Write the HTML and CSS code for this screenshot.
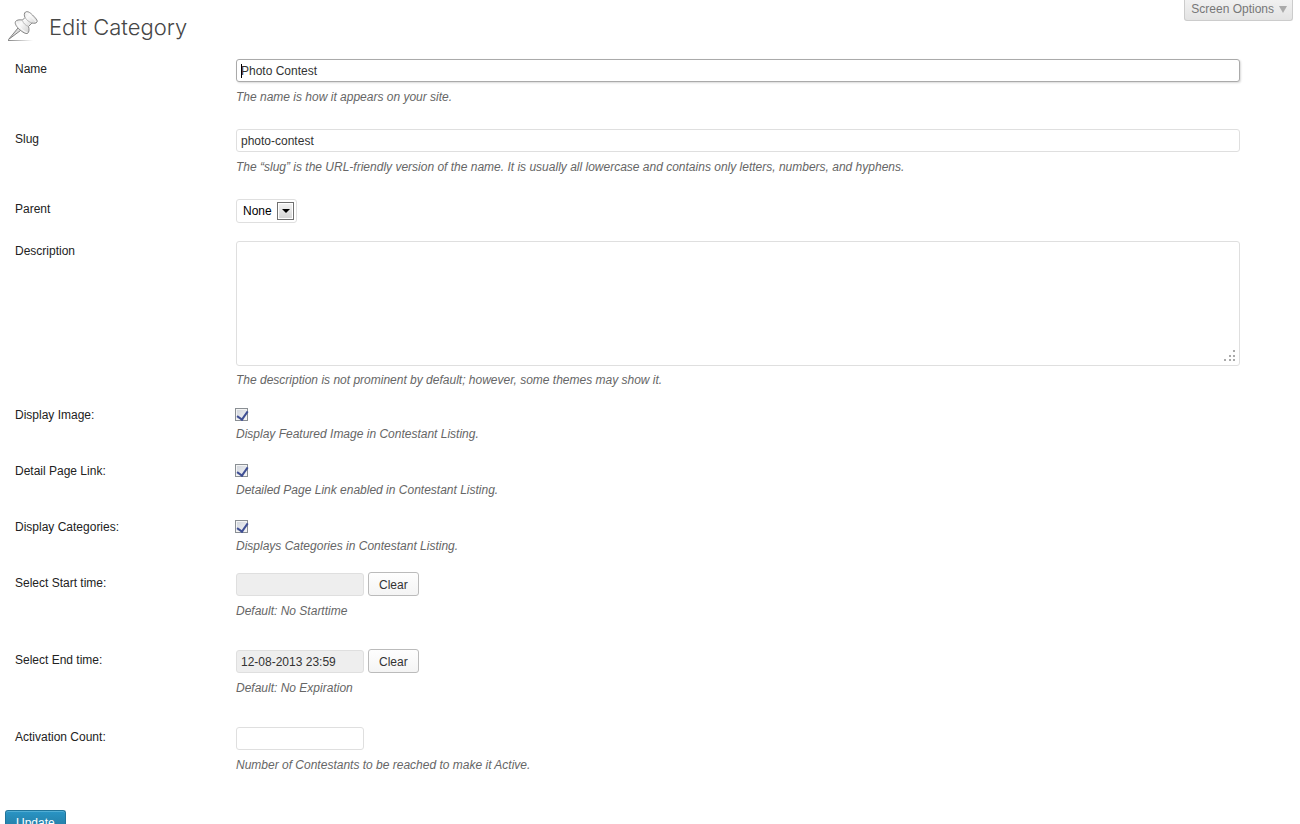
FILE: index.html
```html
<!DOCTYPE html>
<html lang="en">
<head>
  <meta charset="UTF-8">
  <meta name="viewport" content="width=device-width, initial-scale=1.0">
  <title>Edit Category</title>
  <link rel="stylesheet" href="styles.css">
</head>
<body>
  <button type="button" class="screen-options">Screen Options <span class="arrow"></span></button>

  <div class="wrap">
    <header class="page-title">
      <svg class="icon-pin" width="32" height="32" viewBox="0 0 32 32" aria-hidden="true">
        <defs>
          <linearGradient id="metal" x1="0" y1="0" x2="1" y2="1">
            <stop offset="0" stop-color="#c8c8c8"/>
            <stop offset="0.4" stop-color="#fafafa"/>
            <stop offset="1" stop-color="#bbb"/>
          </linearGradient>
          <linearGradient id="shade" x1="0" y1="0" x2="1" y2="0">
            <stop offset="0" stop-color="#888"/>
            <stop offset="1" stop-color="#888" stop-opacity="0"/>
          </linearGradient>
        </defs>
        <path d="M1 29h25v1H1z" fill="url(#shade)"/>
        <path d="M1.500 28.500 L11 17 L13.500 19.500 Z" fill="#ddd" stroke="#777" stroke-width="0.900" stroke-linejoin="round"/>
        <path d="M8.500 10.500 C9.500 9 12 8.500 15.500 9 L18 6.500 C17 4.500 17 2 18.500 1 C20.500 0 22.500 1 25.500 4 C28.500 7 31 9.500 30 11 C29 12.500 27 12.500 25 12 L21.500 15.500 C22.500 18.500 22 21.500 20.500 22.500 C18.500 23 16 21.500 12.500 18.500 C9.500 15.500 7.500 13 8.500 10.500 Z" fill="url(#metal)" stroke="#888" stroke-width="1" stroke-linejoin="round"/>
        <path d="M15.500 9.500 C16 12 18.500 14.500 21.500 15.500 M18 6.500 C19.500 9 22 11 25 12" fill="none" stroke="#aaa" stroke-width="0.800"/>
        <path d="M19 2 C22 3 27 8 29 11 M9.500 11 C11 15.500 16 20 20 21.500" fill="none" stroke="#fff" stroke-width="1"/>
      </svg>
      <h1>Edit Category</h1>
    </header>

    <form>
      <div class="row row-text">
        <label for="name">Name</label>
        <div class="field">
          <div class="focused"><input type="text" id="name" name="name" class="wide" value="Photo Contest"></div>
          <p>The name is how it appears on your site.</p>
        </div>
      </div>
      <div class="row row-text">
        <label for="slug">Slug</label>
        <div class="field">
          <input type="text" id="slug" name="slug" class="wide" value="photo-contest">
          <p>The “slug” is the URL-friendly version of the name. It is usually all lowercase and contains only letters, numbers, and hyphens.</p>
        </div>
      </div>
      <div class="row row-select">
        <label for="parent">Parent</label>
        <div class="field">
          <div class="select">
            <select id="parent" name="parent"><option>None</option></select>
            <span class="drop"></span>
          </div>
        </div>
      </div>
      <div class="row row-area">
        <label for="description">Description</label>
        <div class="field">
          <div class="area">
            <textarea id="description" name="description"></textarea>
            <svg class="grip" width="12" height="12" viewBox="0 0 12 12" fill="#aaa" aria-hidden="true">
              <path d="M9 0h2v2h-2zM5 5h2v2h-2zM9 5h2v2h-2zM0 9h2v2h-2zM5 9h2v2h-2zM9 9h2v2h-2z"/>
            </svg>
          </div>
          <p>The description is not prominent by default; however, some themes may show it.</p>
        </div>
      </div>
      <div class="row row-check">
        <label for="image">Display Image:</label>
        <div class="field">
          <input type="checkbox" id="image" name="image" checked>
          <p>Display Featured Image in Contestant Listing.</p>
        </div>
      </div>
      <div class="row row-check">
        <label for="detail">Detail Page Link:</label>
        <div class="field">
          <input type="checkbox" id="detail" name="detail" checked>
          <p>Detailed Page Link enabled in Contestant Listing.</p>
        </div>
      </div>
      <div class="row row-check">
        <label for="categories">Display Categories:</label>
        <div class="field">
          <input type="checkbox" id="categories" name="categories" checked>
          <p>Displays Categories in Contestant Listing.</p>
        </div>
      </div>
      <div class="row row-time">
        <label for="start">Select Start time:</label>
        <div class="field">
          <div class="time">
            <input type="text" id="start" name="start" readonly>
            <button type="button" class="clear" onclick="document.getElementById('start').value = ''">Clear</button>
          </div>
          <p>Default: No Starttime</p>
        </div>
      </div>
      <div class="row row-time">
        <label for="end">Select End time:</label>
        <div class="field">
          <div class="time">
            <input type="text" id="end" name="end" value="12-08-2013 23:59" readonly>
            <button type="button" class="clear" onclick="document.getElementById('end').value = ''">Clear</button>
          </div>
          <p>Default: No Expiration</p>
        </div>
      </div>
      <div class="row row-time">
        <label for="count">Activation Count:</label>
        <div class="field">
          <input type="text" id="count" name="count">
          <p>Number of Contestants to be reached to make it Active.</p>
        </div>
      </div>

      <button type="submit" class="update">Update</button>
    </form>
  </div>
</body>
</html>
```

FILE: styles.css
```css
* { box-sizing: border-box; }
body { margin: 0; background: #fff; color: #333; font-family: "Liberation Sans", Arial, sans-serif; font-size: 12px; line-height: 18px; }
input, textarea, select, button { margin: 0; font-family: inherit; font-size: 12px; }

.screen-options { position: absolute; top: 0; right: 7px; height: 21px; padding: 0 5px 2px 6px; display: flex; align-items: center; gap: 5px; background: linear-gradient(#f1f1f1, #e3e3e3); border: 1px solid #ccc; border-top: none; border-radius: 0 0 3px 3px; color: #777; }
.arrow { border: 4px solid transparent; border-top: 7px solid #aaa; border-bottom: none; }

.wrap { padding: 0 7px 20px 5px; }
.page-title { display: flex; align-items: center; gap: 10px; height: 55px; padding: 0 0 2px 2px; }
.page-title h1 { margin: 0; color: #464646; font-family: Inter, "Helvetica Neue", sans-serif; font-size: 22px; font-weight: 300; line-height: 32px; }

.row { display: grid; grid-template-columns: 221px 1fr; padding: 4px 0 0 10px; }
.row > label { color: #222; line-height: 20px; }
.row-text { height: 70px; }
.row-select { height: 42px; }
.row-area { height: 164px; }
.row-check { height: 56px; }
.row-time { height: 77px; }
.field p { margin: 6px 0 0; color: #666; font-style: italic; }

input[type="text"], textarea { display: block; width: 128px; height: 23px; padding: 0 4px; background: #fff; border: 1px solid #dfdfdf; border-radius: 3px; color: #333; outline: none; }
input[type="text"].wide { width: 95%; }
input[readonly] { background: #eee; }
.focused { position: relative; }
.focused::after { content: ""; position: absolute; left: 5px; top: 5px; width: 1px; height: 14px; background: #000; }
.focused input[type="text"] { border-color: #aaa; box-shadow: 1px 1px 2px rgba(0, 0, 0, 0.15); }

.select { position: relative; width: 61px; }
.select select { display: block; width: 100%; height: 24px; padding: 0 6px; appearance: none; background: #fff; border: 1px solid #dfdfdf; border-radius: 3px; color: #000; }
.drop { position: absolute; top: 3px; right: 3px; width: 17px; height: 18px; display: flex; align-items: center; justify-content: center; background: linear-gradient(#f4f4f4, #d4d4d4); border: 1px solid #707070; box-shadow: inset 0 0 0 1px #fff; pointer-events: none; }
.drop::after { content: ""; border: 4px solid transparent; border-top-color: #000; border-bottom: none; }

.area { position: relative; width: 95%; }
.area textarea { width: 100%; height: 125px; resize: none; }
.grip { position: absolute; right: 4px; bottom: 4px; }
.area + p { margin-top: 5px; }

.row-check input { display: block; width: 13px; height: 13px; margin: 3px 0 0 -1px; appearance: none; border: 1px solid #8a8f94; box-shadow: inset 0 0 0 1px #f4f4f4; background: linear-gradient(135deg, #cfd4dc, #f6f6f6); position: relative; }
.row-check input:checked::after { content: ""; position: absolute; left: 3px; top: 0; width: 5px; height: 9px; border: solid #3f4f94; border-width: 0 2px 2px 0; transform: rotate(35deg); }
.row-check p { margin-top: 4px; }

.time { display: flex; gap: 4px; height: 23px; align-items: flex-end; }
.clear { height: 24px; padding: 1px 10px 0; background: linear-gradient(#fefefe, #f4f4f4); border: 1px solid #bbb; border-radius: 3px; color: #333; cursor: pointer; }
.update { display: block; margin-top: 10px; height: 24px; padding: 1px 10px 0; background: linear-gradient(#2a95c5, #21759b); border: 1px solid #21759b; border-bottom-color: #1e6a8d; border-radius: 3px; box-shadow: inset 0 1px 0 rgba(120, 200, 230, 0.5); color: #fff; cursor: pointer; }
.update:hover { background: #278ab7; }
```
